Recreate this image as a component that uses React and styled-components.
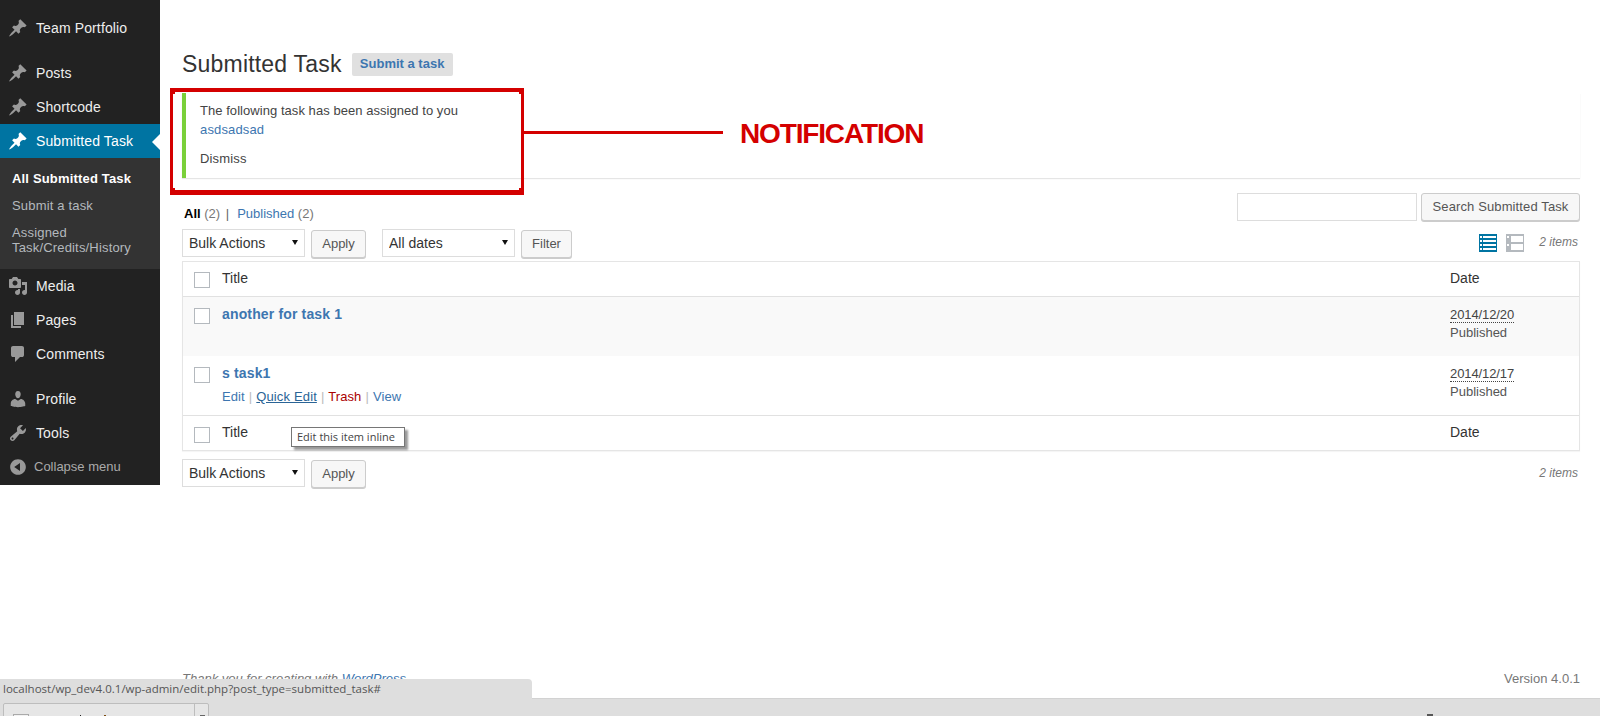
import React from "react";
import styled, { createGlobalStyle } from "styled-components";

const Global = createGlobalStyle`
  html, body { margin: 0; padding: 0; background: #fff; }
  body { font-family: "Liberation Sans", Arial, sans-serif; font-size: 13px; color: #444; overflow: hidden; }
  * { box-sizing: border-box; }
`;

const Page = styled.div`
  position: relative;
  display: flex;
  align-items: flex-start;
  width: 1600px;
  height: 716px;
  overflow: hidden;
`;

/* ---------- sidebar ---------- */
const Sidebar = styled.nav`
  flex: 0 0 160px;
  height: 485px;
  padding-top: 11px;
  background: #222;
`;
const MenuGroup = styled.div`
  margin-bottom: 11px;
`;
const MenuItem = styled.a`
  position: relative;
  display: flex;
  align-items: center;
  height: 34px;
  padding-left: 8px;
  gap: 8px;
  font-size: 14px;
  letter-spacing: 0.12px;
  color: ${(p) => (p.$active ? "#fff" : "#eee")};
  background: ${(p) => (p.$active ? "#0074a2" : "transparent")};
  svg { flex: none; fill: ${(p) => (p.$active ? "#fff" : "#999")}; }
  ${(p) =>
    p.$active &&
    `&::after {
      content: "";
      position: absolute;
      right: 0;
      top: 10px;
      border: 8px solid transparent;
      border-right-color: #fff;
      border-left-width: 0;
    }`}
`;
const SubMenu = styled.div`
  height: 111px;
  padding: 13px 12px 0;
  background: #333;
`;
const SubItem = styled.a`
  display: block;
  font-size: 13px;
  line-height: 15px;
  margin-bottom: 12px;
  letter-spacing: 0.17px;
  color: ${(p) => (p.$current ? "#fff" : "#b4b9be")};
  font-weight: ${(p) => (p.$current ? 700 : 400)};
`;
const Collapse = styled.div`
  display: flex;
  align-items: center;
  height: 33px;
  padding-left: 8px;
  gap: 6px;
  font-size: 13px;
  color: #aaa;
  svg { flex: none; fill: #999; }
`;

/* ---------- main ---------- */
const Main = styled.main`
  flex: 1;
  height: 716px;
  display: flex;
  flex-direction: column;
  padding: 49px 20px 0 22px;
  min-width: 0;
`;
const HeadingRow = styled.div`
  display: flex;
  align-items: center;
  gap: 10px;
  height: 30px;
`;
const Heading = styled.h2`
  margin: 0;
  font-size: 23px;
  font-weight: 400;
  letter-spacing: 0.2px;
  color: #333;
`;
const AddNew = styled.a`
  display: block;
  width: 101px;
  height: 23px;
  line-height: 22px;
  text-align: center;
  font-size: 13px;
  font-weight: 700;
  border-radius: 2px;
  background: #e0e0e0;
  color: #3d76b0;
`;
const Notice = styled.div`
  height: 85px;
  margin-top: 14px;
  padding: 8px 14px;
  background: #fff;
  border-left: 4px solid #7ad03a;
  box-shadow: 0 1px 1px rgba(0, 0, 0, 0.1);
  line-height: 19px;
`;
const NoticeLine = styled.p`
  margin: 0 0 ${(p) => p.$gap || 0}px;
  letter-spacing: ${(p) => (p.$tight ? 0.05 : 0.15)}px;
`;
const Link = styled.a`
  color: #3d76b0;
`;
const SearchRow = styled.div`
  display: flex;
  align-items: center;
  justify-content: space-between;
  height: 28px;
  margin-top: 15px;
`;
const Views = styled.div`
  padding-top: 13px;
  padding-left: 2px;
  color: #777;
  a { color: #3d76b0; }
  b { color: #000; }
`;
const Sep = styled.span`
  margin: 0 8px 0 2px;
  color: #666;
`;
const SearchBox = styled.div`
  display: flex;
  gap: 4px;
`;
const SearchInput = styled.input`
  width: 180px;
  height: 28px;
  padding: 0;
  border: 1px solid #ddd;
  background: #fff;
  outline: none;
`;
const Button = styled.button`
  width: ${(p) => p.$w}px;
  height: 28px;
  padding: 0 0 2px;
  font: 13px "Liberation Sans", Arial, sans-serif;
  letter-spacing: ${(p) => p.$spread || 0}px;
  color: #555;
  background: #f7f7f7;
  border: 1px solid #ccc;
  border-radius: 3px;
  box-shadow: 0 1px 0 #ccc;
`;
const NavRow = styled.div`
  display: flex;
  align-items: flex-start;
  height: 32px;
  margin-top: ${(p) => p.$top}px;
`;
const SelectWrap = styled.div`
  position: relative;
  width: ${(p) => p.$w}px;
  height: 28px;
  margin-right: ${(p) => p.$mr}px;
  &::after {
    content: "";
    position: absolute;
    right: 7px;
    top: 11px;
    border-style: solid;
    border-width: 5px 3px 0;
    border-color: #111 transparent transparent;
  }
`;
const Select = styled.select`
  appearance: none;
  width: 100%;
  height: 28px;
  padding: 0 0 0 6px;
  font: 14px "Liberation Sans", Arial, sans-serif;
  color: #333;
  background: #fff;
  border: 1px solid #ddd;
  border-radius: 0;
  outline: none;
`;
const ButtonSlot = styled.div`
  padding-top: 1px;
  margin-right: ${(p) => p.$mr || 0}px;
`;
const NavEnd = styled.div`
  margin-left: auto;
  display: flex;
  align-items: center;
  height: 28px;
  gap: 9px;
  svg { display: block; }
`;
const ItemCount = styled.span`
  margin-left: 6px;
  margin-bottom: ${(p) => (p.$up ? 2 : 0)}px;
  padding-right: 2px;
  font-size: 12px;
  font-style: italic;
  color: #777;
`;

const Table = styled.table`
  position: relative;
  width: 100%;
  border-collapse: separate;
  border-spacing: 0;
  table-layout: fixed;
  border: 1px solid #e5e5e5;
  box-shadow: 0 1px 1px rgba(0, 0, 0, 0.04);
`;
const Row = styled.tr`
  background: ${(p) => (p.$alt ? "#f9f9f9" : "#fff")};
`;
const CheckCell = styled.td`
  width: 39px;
  padding: ${(p) => p.$pad}px 0 0 11px;
  vertical-align: top;
  height: ${(p) => p.$h}px;
  border-bottom: ${(p) => (p.$line ? "1px solid #e1e1e1" : "0")};
  border-top: ${(p) => (p.$topLine ? "1px solid #e1e1e1" : "0")};
`;
const Check = styled.input.attrs({ type: "checkbox" })`
  appearance: none;
  display: block;
  width: 16px;
  height: 16px;
  margin: 0;
  background: #fff;
  border: 1px solid #b4b9be;
`;
const Cell = styled.td`
  position: relative;
  padding: ${(p) => p.$pad}px 0 0;
  vertical-align: top;
  font-size: 14px;
  line-height: 19px;
  color: #333;
  border-bottom: ${(p) => (p.$line ? "1px solid #e1e1e1" : "0")};
  border-top: ${(p) => (p.$topLine ? "1px solid #e1e1e1" : "0")};
`;
const DateCell = styled(Cell)`
  width: 129px;
`;
const RowTitle = styled.a`
  display: block;
  font-size: 14px;
  font-weight: 700;
  letter-spacing: 0.15px;
  color: #3d76b0;
`;
const Actions = styled.div`
  margin-top: 5px;
  font-size: 13px;
  line-height: 18px;
  letter-spacing: 0.1px;
  word-spacing: 0.3px;
  color: #bbb;
`;
const Action = styled.a`
  color: ${(p) => p.$color || "#3d76b0"};
  ${(p) => p.$hover && "color:#2a6496; text-decoration: underline;"}
`;
const Stamp = styled.abbr`
  display: inline-block;
  font-size: 13px;
  line-height: 15px;
  letter-spacing: -0.1px;
  color: #444;
  border-bottom: 1px dotted #444;
`;
const Status = styled.div`
  font-size: 13px;
  line-height: 17px;
  color: #555;
`;
const Tooltip = styled.div`
  position: absolute;
  left: 69px;
  top: 11px;
  width: 114px;
  height: 20px;
  line-height: 18px;
  padding-left: 5px;
  font: 11px/18px "Open Sans", "Liberation Sans", sans-serif;
  color: #444;
  background: #fff;
  border: 1px solid #767676;
  box-shadow: 3px 3px 2px rgba(0, 0, 0, 0.4);
  white-space: nowrap;
`;
const Footer = styled.footer`
  margin-top: auto;
  height: 46px;
  display: flex;
  justify-content: space-between;
  font-size: 13px;
  line-height: 17px;
  color: #777;
  i a { color: #3d76b0; }
`;

/* ---------- annotation ---------- */
const RED = "#d40000";
const Callout = styled.div`
  position: absolute;
  left: 170px;
  top: 88px;
  width: 354px;
  height: 107px;
  border-style: solid;
  border-width: 4px 3px 5px;
  border-color: ${RED};
  background:
    linear-gradient(${RED}, ${RED}) left top / 2px 2px no-repeat,
    linear-gradient(${RED}, ${RED}) right top / 2px 2px no-repeat,
    linear-gradient(${RED}, ${RED}) left bottom / 2px 2px no-repeat,
    linear-gradient(${RED}, ${RED}) right bottom / 2px 2px no-repeat;
`;
const CalloutLine = styled.div`
  position: absolute;
  left: 524px;
  top: 131px;
  width: 199px;
  height: 3px;
  background: ${RED};
`;
const CalloutLabel = styled.div`
  position: absolute;
  left: 740px;
  top: 118px;
  font-size: 28px;
  line-height: 32px;
  font-weight: 700;
  letter-spacing: -1.15px;
  color: ${RED};
`;

/* ---------- browser chrome ---------- */
const StatusBubble = styled.div`
  position: absolute;
  left: 0;
  bottom: 17px;
  width: 532px;
  height: 20px;
  padding-left: 3px;
  font: 11.5px/20px "Open Sans", "Liberation Sans", sans-serif;
  color: #555;
  background: #dedede;
  border-top-right-radius: 4px;
`;
const ChromeBar = styled.div`
  position: absolute;
  left: 0;
  right: 0;
  bottom: 0;
  height: 17px;
  background: #dedede;
`;
const ChromeBarEdge = styled.div`
  position: absolute;
  left: 532px;
  right: 0;
  bottom: 17px;
  height: 1px;
  background: #d2d2d2;
`;
const DownloadTab = styled.div`
  position: absolute;
  left: 3px;
  top: 4px;
  width: 206px;
  height: 16px;
  background: #e6e6e6;
  border: 1px solid #bdbdbd;
  border-radius: 2px 2px 0 0;
`;
const DownloadSplit = styled.div`
  position: absolute;
  left: 190px;
  top: 0;
  bottom: 0;
  width: 1px;
  background: #bdbdbd;
`;
const DownloadIcon = styled.div`
  position: absolute;
  left: 9px;
  top: 10px;
  width: 16px;
  height: 12px;
  background: #f2f2f2;
  border: 1px solid #aaa;
`;
const DownloadGlyph = styled.div`
  position: absolute;
  left: ${(p) => p.$x}px;
  top: 11px;
  width: ${(p) => p.$w}px;
  height: 2px;
  background: ${(p) => p.$c};
`;
const ChromeMark = styled.div`
  position: absolute;
  left: 1427px;
  top: 15px;
  width: 6px;
  height: 2px;
  background: #555;
`;

const Ic = ({ d, size = 20 }) => (
  <svg width={size} height={size} viewBox="0 0 20 20">
    <path d={d} />
  </svg>
);
const PIN = "M10.44 3.02l1.82-1.82 6.36 6.35-1.83 1.82c-1.05-.68-2.48-.57-3.41.36l-.75.75c-.92.93-1.04 2.35-.35 3.41l-1.83 1.82-2.41-2.41-2.8 2.79c-.42.42-3.38 2.71-3.8 2.29s1.86-3.39 2.28-3.81l2.79-2.79L4.1 9.36l1.83-1.82c1.05.69 2.48.57 3.4-.36l.75-.75c.93-.92 1.05-2.35.36-3.41z";
const MEDIA = "M13 11V4c0-.55-.45-1-1-1h-1.67L9 1H5L3.67 3H2c-.55 0-1 .45-1 1v7c0 .55.45 1 1 1h10c.55 0 1-.45 1-1zM7 4.5c1.38 0 2.5 1.12 2.5 2.5S8.38 9.5 7 9.5 4.5 8.38 4.5 7 5.62 4.5 7 4.5zM14 6h5v10.5c0 1.38-1.12 2.5-2.5 2.5S14 17.88 14 16.5s1.12-2.5 2.5-2.5c.17 0 .34.02.5.05V9h-3V6zm-4 8.05V13h2v3.5c0 1.38-1.12 2.5-2.5 2.5S7 17.88 7 16.5 8.12 14 9.5 14c.17 0 .34.02.5.05z";
const PAGES = "M6 15V2h10v13H6zm-1 1h8v2H3V5h2v11z";
const COMMENTS = "M5 2h9q.82 0 1.41.59T16 4v7q0 .82-.59 1.41T14 13h-2l-5 5v-5H5q-.82 0-1.41-.59T3 11V4q0-.82.59-1.41T5 2z";
const USERS = "M10 9.25c-2.27 0-2.73-3.44-2.73-3.44C7 4.02 7.82 2 9.97 2c2.16 0 2.98 2.02 2.71 3.81 0 0-.41 3.44-2.68 3.44zm0 2.57L12.72 10c2.39 0 4.52 2.33 4.52 4.53v2.49s-3.65 1.13-7.24 1.13c-3.65 0-7.24-1.13-7.24-1.13v-2.49c0-2.25 1.94-4.48 4.47-4.48z";
const TOOLS = "M16.68 9.77c-1.34 1.34-3.3 1.67-4.95.99l-5.41 6.52c-.99.99-2.59.99-3.58 0s-.99-2.59 0-3.57l6.52-5.42c-.68-1.65-.35-3.61.99-4.95 1.28-1.28 3.12-1.62 4.72-1.06l-2.89 2.89 2.82 2.82 2.86-2.87c.53 1.58.18 3.39-1.08 4.65zM3.81 16.21c.4.39 1.04.39 1.43 0 .4-.4.4-1.04 0-1.43-.39-.4-1.03-.4-1.43 0-.39.39-.39 1.03 0 1.43z";
const COLLAPSE = "M10 2.16c4.33 0 7.84 3.51 7.84 7.84s-3.51 7.84-7.84 7.84S2.16 14.33 2.16 10 5.71 2.16 10 2.16zm2 11.72V6.12L6.18 9.97z";

const ListViewIcon = () => (
  <svg width="18" height="18" viewBox="0 0 18 18">
    <rect width="18" height="18" fill="#0074a2" />
    {[2, 6, 10, 14].map((y) => (
      <g key={y} fill="#fff">
        <rect x="1" y={y} width="2" height="2" />
        <rect x="4" y={y} width="13" height="2" />
      </g>
    ))}
  </svg>
);
const ExcerptViewIcon = () => (
  <svg width="18" height="18" viewBox="0 0 18 18">
    <rect width="18" height="18" fill="#b4b9be" />
    <g fill="#fff">
      <rect x="1" y="2" width="2" height="2" />
      <rect x="5" y="2" width="12" height="6" />
      <rect x="1" y="10" width="2" height="2" />
      <rect x="5" y="10" width="12" height="6" />
    </g>
  </svg>
);

const BulkActions = () => (
  <SelectWrap $w={123} $mr={6}>
    <Select defaultValue="bulk">
      <option value="bulk">Bulk Actions</option>
    </Select>
  </SelectWrap>
);

export default function App() {
  return (
    <>
      <Global />
      <Page>
        <Sidebar>
          <MenuGroup>
            <MenuItem><Ic d={PIN} />Team Portfolio</MenuItem>
          </MenuGroup>
          <MenuItem><Ic d={PIN} />Posts</MenuItem>
          <MenuItem><Ic d={PIN} />Shortcode</MenuItem>
          <MenuItem $active><Ic d={PIN} />Submitted Task</MenuItem>
          <SubMenu>
            <SubItem $current>All Submitted Task</SubItem>
            <SubItem>Submit a task</SubItem>
            <SubItem>Assigned Task/Credits/History</SubItem>
          </SubMenu>
          <MenuItem><Ic d={MEDIA} />Media</MenuItem>
          <MenuItem><Ic d={PAGES} />Pages</MenuItem>
          <MenuGroup>
            <MenuItem><Ic d={COMMENTS} />Comments</MenuItem>
          </MenuGroup>
          <MenuItem><Ic d={USERS} />Profile</MenuItem>
          <MenuItem><Ic d={TOOLS} />Tools</MenuItem>
          <Collapse><Ic d={COLLAPSE} />Collapse menu</Collapse>
        </Sidebar>

        <Main>
          <HeadingRow>
            <Heading>Submitted Task</Heading>
            <AddNew>Submit a task</AddNew>
          </HeadingRow>
          <Notice>
            <NoticeLine $tight>The following task has been assigned to you</NoticeLine>
            <NoticeLine $gap={10}><Link>asdsadsad</Link></NoticeLine>
            <NoticeLine>Dismiss</NoticeLine>
          </Notice>
          <SearchRow>
            <Views>
              <b>All</b> (2) <Sep>|</Sep><a>Published</a> (2)
            </Views>
            <SearchBox>
              <SearchInput />
              <Button $w={159} $spread={0.12}>Search Submitted Task</Button>
            </SearchBox>
          </SearchRow>
          <NavRow $top={8}>
            <BulkActions />
            <ButtonSlot $mr={16}><Button $w={55}>Apply</Button></ButtonSlot>
            <SelectWrap $w={133} $mr={6}>
              <Select defaultValue="all">
                <option value="all">All dates</option>
              </Select>
            </SelectWrap>
            <ButtonSlot><Button $w={51}>Filter</Button></ButtonSlot>
            <NavEnd>
              <ListViewIcon />
              <ExcerptViewIcon />
              <ItemCount $up>2 items</ItemCount>
            </NavEnd>
          </NavRow>
          <Table>
            <tbody>
              <Row>
                <CheckCell $pad={10} $h={35} $line><Check /></CheckCell>
                <Cell $pad={7} $line>Title</Cell>
                <DateCell $pad={7} $line>Date</DateCell>
              </Row>
              <Row $alt>
                <CheckCell $pad={11} $h={59}><Check /></CheckCell>
                <Cell $pad={8}><RowTitle>another for task 1</RowTitle></Cell>
                <DateCell $pad={8}>
                  <Stamp>2014/12/20</Stamp>
                  <Status>Published</Status>
                </DateCell>
              </Row>
              <Row>
                <CheckCell $pad={11} $h={59}><Check /></CheckCell>
                <Cell $pad={8}>
                  <RowTitle>s task1</RowTitle>
                  <Actions>
                    <Action>Edit</Action> | <Action $hover>Quick Edit</Action> | <Action $color="#a00">Trash</Action> | <Action>View</Action>
                  </Actions>
                </Cell>
                <DateCell $pad={8}>
                  <Stamp>2014/12/17</Stamp>
                  <Status>Published</Status>
                </DateCell>
              </Row>
              <Row>
                <CheckCell $pad={11} $h={35} $topLine><Check /></CheckCell>
                <Cell $pad={7} $topLine>
                  Title
                  <Tooltip>Edit this item inline</Tooltip>
                </Cell>
                <DateCell $pad={7} $topLine>Date</DateCell>
              </Row>
            </tbody>
          </Table>
          <NavRow $top={8}>
            <BulkActions />
            <ButtonSlot><Button $w={55}>Apply</Button></ButtonSlot>
            <NavEnd>
              <ItemCount>2 items</ItemCount>
            </NavEnd>
          </NavRow>
          <Footer>
            <i>Thank you for creating with <a>WordPress</a>.</i>
            <span>Version 4.0.1</span>
          </Footer>
        </Main>

        <Callout />
        <CalloutLine />
        <CalloutLabel>NOTIFICATION</CalloutLabel>

        <ChromeBarEdge />
        <StatusBubble>localhost/wp_dev4.0.1/wp-admin/edit.php?post_type=submitted_task#</StatusBubble>
        <ChromeBar>
          <DownloadTab>
            <DownloadIcon />
            <DownloadGlyph $x={76} $w={1} $c="#222" />
            <DownloadGlyph $x={100} $w={2} $c="#7a4a10" />
            <DownloadSplit />
            <DownloadGlyph $x={196} $w={5} $c="#666" />
          </DownloadTab>
          <ChromeMark />
        </ChromeBar>
      </Page>
    </>
  );
}
